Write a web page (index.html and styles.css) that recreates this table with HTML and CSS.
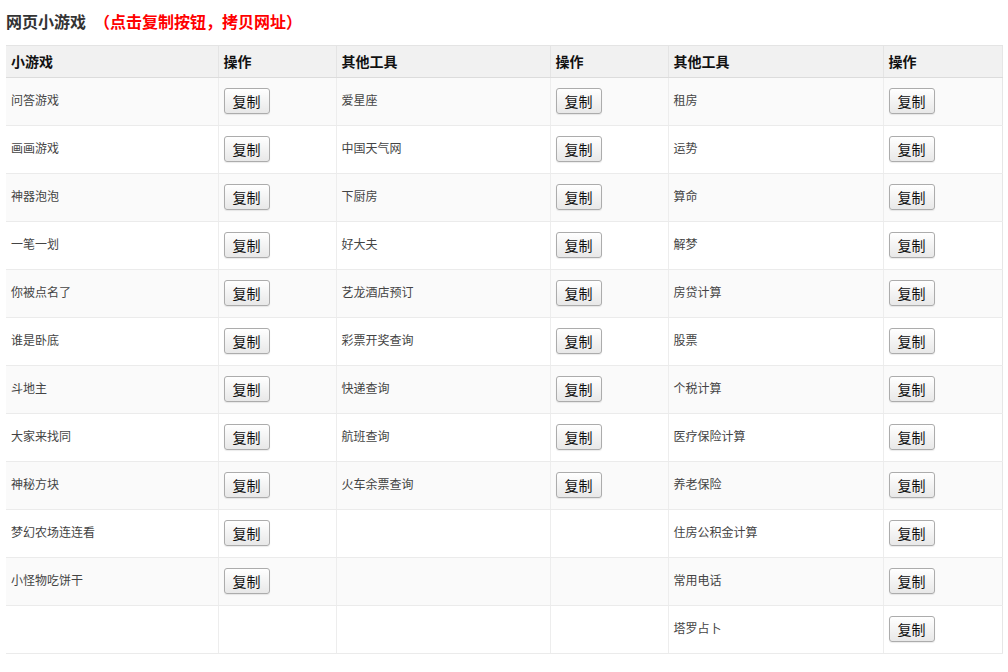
FILE: index.html
```html
<!DOCTYPE html>
<html lang="zh-CN">
<head>
<meta charset="utf-8">
<title>网页小游戏</title>
<link rel="stylesheet" href="styles.css">
</head>
<body>
<div class="page">
  <h1 class="title">网页小游戏<span class="hint">（点击复制按钮，拷贝网址）</span></h1>
  <table class="grid">
    <colgroup>
      <col class="c-name1"><col class="c-op"><col class="c-name2"><col class="c-op"><col class="c-name3"><col class="c-op3">
    </colgroup>
    <thead>
      <tr><th>小游戏</th><th>操作</th><th>其他工具</th><th>操作</th><th>其他工具</th><th>操作</th></tr>
    </thead>
    <tbody>
      <tr><td>问答游戏</td><td><button class="btn">复制</button></td><td>爱星座</td><td><button class="btn">复制</button></td><td>租房</td><td><button class="btn">复制</button></td></tr>
      <tr><td>画画游戏</td><td><button class="btn">复制</button></td><td>中国天气网</td><td><button class="btn">复制</button></td><td>运势</td><td><button class="btn">复制</button></td></tr>
      <tr><td>神器泡泡</td><td><button class="btn">复制</button></td><td>下厨房</td><td><button class="btn">复制</button></td><td>算命</td><td><button class="btn">复制</button></td></tr>
      <tr><td>一笔一划</td><td><button class="btn">复制</button></td><td>好大夫</td><td><button class="btn">复制</button></td><td>解梦</td><td><button class="btn">复制</button></td></tr>
      <tr><td>你被点名了</td><td><button class="btn">复制</button></td><td>艺龙酒店预订</td><td><button class="btn">复制</button></td><td>房贷计算</td><td><button class="btn">复制</button></td></tr>
      <tr><td>谁是卧底</td><td><button class="btn">复制</button></td><td>彩票开奖查询</td><td><button class="btn">复制</button></td><td>股票</td><td><button class="btn">复制</button></td></tr>
      <tr><td>斗地主</td><td><button class="btn">复制</button></td><td>快递查询</td><td><button class="btn">复制</button></td><td>个税计算</td><td><button class="btn">复制</button></td></tr>
      <tr><td>大家来找同</td><td><button class="btn">复制</button></td><td>航班查询</td><td><button class="btn">复制</button></td><td>医疗保险计算</td><td><button class="btn">复制</button></td></tr>
      <tr><td>神秘方块</td><td><button class="btn">复制</button></td><td>火车余票查询</td><td><button class="btn">复制</button></td><td>养老保险</td><td><button class="btn">复制</button></td></tr>
      <tr><td>梦幻农场连连看</td><td><button class="btn">复制</button></td><td></td><td></td><td>住房公积金计算</td><td><button class="btn">复制</button></td></tr>
      <tr><td>小怪物吃饼干</td><td><button class="btn">复制</button></td><td></td><td></td><td>常用电话</td><td><button class="btn">复制</button></td></tr>
      <tr><td></td><td></td><td></td><td></td><td>塔罗占卜</td><td><button class="btn">复制</button></td></tr>
    </tbody>
  </table>
</div>
</body>
</html>
```

FILE: styles.css
```css
html, body {
  margin: 0;
  padding: 0;
  background: #fff;
}
body {
  font-family: "Noto Sans CJK SC", "Noto Sans", "Liberation Sans", sans-serif;
  color: #333;
}
.page {
  padding: 9px 6px 0;
}
.title {
  margin: 0 0 12px;
  font-size: 16px;
  line-height: 24px;
  font-weight: bold;
  color: #333;
}
.hint {
  color: #f00;
  margin-left: 8px;
}
.grid {
  width: 996px;
  border-collapse: collapse;
  table-layout: fixed;
  font-size: 12px;
  border-right: 1px solid #e6e6e6;
}
.c-name1 { width: 212px; }
.c-op { width: 118px; }
.c-name2 { width: 214px; }
.c-name3 { width: 215px; }
.c-op3 { width: 119px; }
.grid th {
  background: #f1f1f1;
  color: #111;
  font-size: 14px;
  font-weight: bold;
  text-align: left;
  height: 31px;
  padding: 0 5px;
  line-height: 31px;
  border-top: 1px solid #e4e4e4;
  border-bottom: 1px solid #dcdcdc;
  border-left: 1px solid #e4e4e4;
}
.grid th:first-child,
.grid td:first-child {
  border-left: 0;
}
.grid td {
  height: 37px;
  padding: 10px 5px 0;
  vertical-align: top;
  line-height: 24px;
  color: #444;
  border-bottom: 1px solid #ebebeb;
  border-left: 1px solid #ededed;
}
.grid tbody tr:nth-child(odd) td {
  background: #fafafa;
}
.btn {
  display: block;
  width: 46px;
  height: 26px;
  padding: 0;
  margin: 0;
  font-family: "Noto Sans CJK SC", "Noto Sans", sans-serif;
  font-size: 14px;
  line-height: 24px;
  color: #111;
  background: linear-gradient(#ffffff, #e8e8e8);
  border: 1px solid #acacac;
  border-radius: 3px;
  box-shadow: 0 1px 1px rgba(0,0,0,0.08);
}
```
